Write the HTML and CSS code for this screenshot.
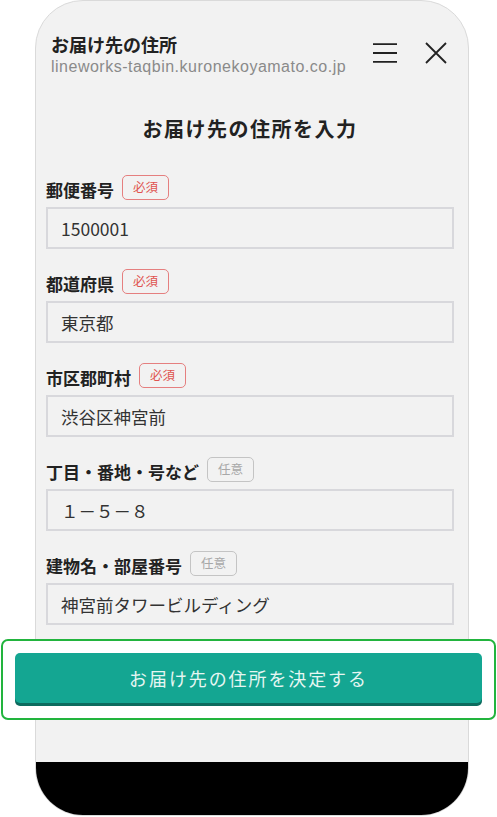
FILE: index.html
```html
<!DOCTYPE html>
<html lang="ja">
<head>
<meta charset="utf-8">
<title>お届け先の住所</title>
<link rel="stylesheet" href="styles.css">
</head>
<body>
<div class="phone">
  <header class="header">
    <div class="titles">
      <div class="app-title">お届け先の住所</div>
      <div class="app-url">lineworks-taqbin.kuronekoyamato.co.jp</div>
    </div>
    <div class="icons">
      <svg class="icon-menu" width="24" height="20" viewBox="0 0 24 20"><path d="M0 1.2H24M0 10H24M0 18.8H24" stroke="#222" stroke-width="1.8" fill="none"/></svg>
      <svg class="icon-close" width="22" height="22" viewBox="0 0 22 22"><path d="M1 1L21 21M21 1L1 21" stroke="#222" stroke-width="1.8" fill="none"/></svg>
    </div>
  </header>
  <main class="content">
    <h1 class="heading">お届け先の住所を入力</h1>
    <div class="form">
      <div class="field">
        <div class="label-row"><span class="label">郵便番号</span><span class="badge badge-req">必須</span></div>
        <input class="input" type="text" value="1500001">
      </div>
      <div class="field">
        <div class="label-row"><span class="label">都道府県</span><span class="badge badge-req">必須</span></div>
        <input class="input" type="text" value="東京都">
      </div>
      <div class="field">
        <div class="label-row"><span class="label">市区郡町村</span><span class="badge badge-req">必須</span></div>
        <input class="input" type="text" value="渋谷区神宮前">
      </div>
      <div class="field">
        <div class="label-row"><span class="label">丁目・番地・号など</span><span class="badge badge-opt">任意</span></div>
        <input class="input" type="text" value="１－５－８">
      </div>
      <div class="field">
        <div class="label-row"><span class="label">建物名・部屋番号</span><span class="badge badge-opt">任意</span></div>
        <input class="input" type="text" value="神宮前タワービルディング">
      </div>
    </div>
    <div class="highlight">
      <button class="submit" type="button">お届け先の住所を決定する</button>
    </div>
  </main>
  <div class="spacer"></div>
  <div class="bottom-bar"></div>
</div>
</body>
</html>
```
FILE: styles.css
```css
html, body {
  margin: 0;
  padding: 0;
  background: #ffffff;
}
body {
  width: 497px;
  height: 817px;
  overflow: hidden;
  font-family: "Noto Sans CJK JP", "Noto Sans", sans-serif;
}
.phone {
  box-sizing: border-box;
  margin-left: 35px;
  width: 434px;
  height: 816px;
  border: 1px solid #dadada;
  border-radius: 48px;
  background: #f2f2f2;
  display: flex;
  flex-direction: column;
}
.header {
  display: flex;
  justify-content: space-between;
  align-items: flex-start;
  padding: 32px 21px 0 15px;
}
.app-title {
  font-size: 18px;
  line-height: 22px;
  font-weight: 700;
  color: #222;
}
.app-url {
  margin-top: 2px;
  font-family: "Liberation Sans", "Noto Sans", sans-serif;
  font-size: 16px;
  line-height: 20px;
  letter-spacing: 0.5px;
  color: #8a8a8a;
}
.icons {
  display: flex;
  align-items: flex-start;
  gap: 28px;
  margin-top: 9px;
}
.icon-menu { margin-top: 1px; }
.content {
  padding: 0 14px 0 10px;
  display: flex;
  flex-direction: column;
}
.heading {
  margin: 38px 0 0;
  text-align: center;
  font-size: 20px;
  line-height: 28px;
  font-weight: 700;
  letter-spacing: 1.5px;
  color: #222;
}
.form {
  margin-top: 32px;
  display: flex;
  flex-direction: column;
  gap: 20px;
}
.field {
  display: flex;
  flex-direction: column;
  gap: 7px;
}
.label-row {
  display: flex;
  align-items: center;
  gap: 8px;
  height: 25px;
}
.label {
  font-size: 17px;
  line-height: 25px;
  font-weight: 700;
  color: #222;
  margin-top: 3px;
}
.badge {
  box-sizing: border-box;
  height: 25px;
  padding: 0 10px;
  border: 1.5px solid;
  border-radius: 5px;
  font-size: 12.5px;
  line-height: 22px;
}
.badge-req {
  border-color: #e57f7f;
  color: #e0544f;
}
.badge-opt {
  border-color: #c4c4c4;
  color: #a8a8a8;
}
.input {
  box-sizing: border-box;
  display: block;
  width: 100%;
  height: 42px;
  margin: 0;
  padding: 0 13px;
  border: 2px solid #d8d8dc;
  border-radius: 0;
  background: #f2f2f2;
  font-family: "Noto Sans CJK JP", "Noto Sans", sans-serif;
  font-size: 17.5px;
  color: #333;
  outline: none;
}
.highlight {
  margin: 14px -42px 0 -45px;
  padding: 12px 12px 15px;
  border: 2px solid #22b43e;
  border-radius: 7px;
  background: #ffffff;
}
.submit {
  display: block;
  width: 100%;
  height: 50px;
  margin: 0;
  border: none;
  border-radius: 5px;
  background: #14a692;
  box-shadow: 0 3px 0 #0c6b5e;
  font-family: "Noto Sans CJK JP", "Noto Sans", sans-serif;
  font-size: 18px;
  letter-spacing: 1.9px;
  color: #e6f6f2;
  padding: 0;
}
.spacer { flex: 1; }
.bottom-bar {
  height: 53px;
  background: #000;
  border-radius: 0 0 47px 47px;
}
```
